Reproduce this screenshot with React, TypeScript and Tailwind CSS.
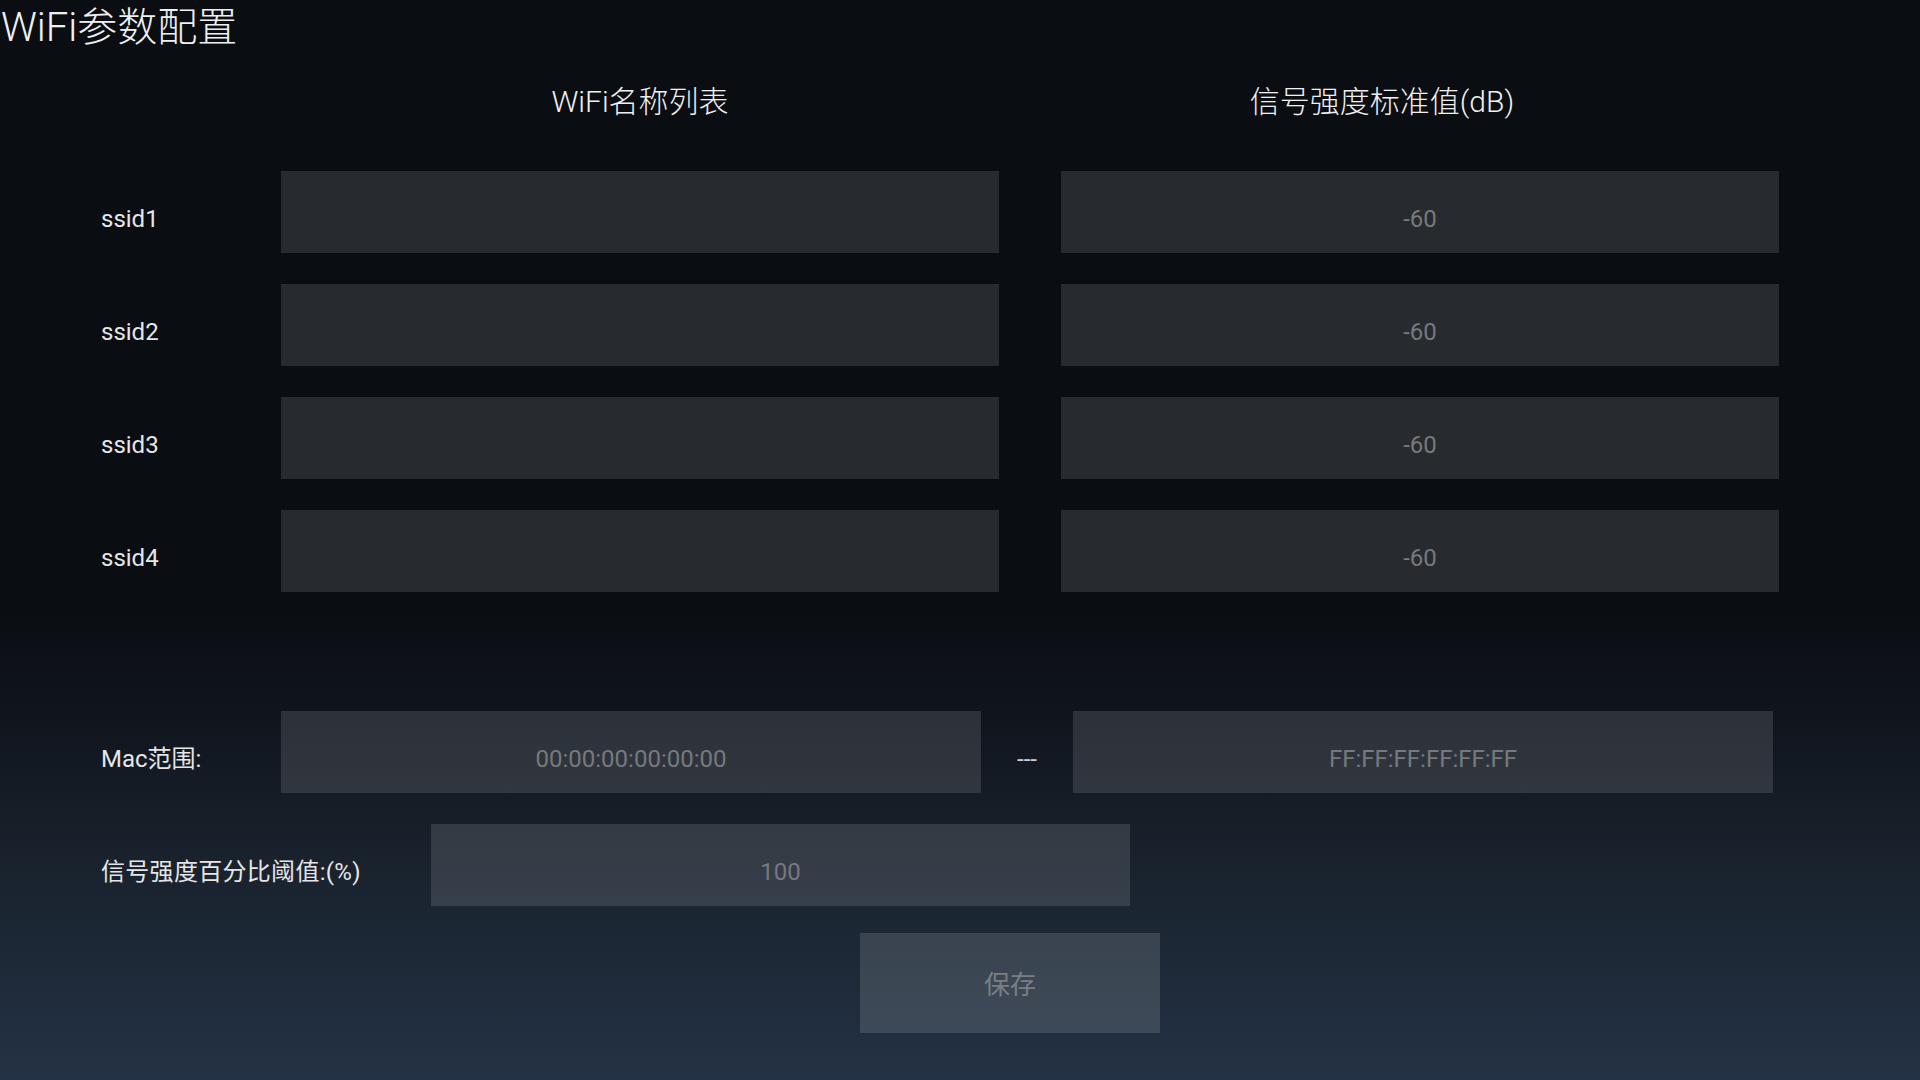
import React from "react";

const ssids = ["ssid1", "ssid2", "ssid3", "ssid4"];

export default function App() {
  return (
    <div className="h-[1080px] w-full overflow-hidden bg-[linear-gradient(180deg,#0a0d12_0%,#0a0d12_56%,#10151d_66%,#19222d_80%,#243245_100%)] font-['Roboto','Noto_Sans_CJK_SC',sans-serif] text-[#e6e6e6]">
      <h1 className="pl-[1px] text-[40px] font-light leading-[56px] text-[#f0f0f0]">WiFi参数配置</h1>

      <div className="flex h-[90px] items-center font-light text-[#f0f0f0]">
        <div className="ml-[281px] w-[718px] text-center text-[30px]">WiFi名称列表</div>
        <div className="ml-[62px] w-[642px] text-center text-[30px]">信号强度标准值(dB)</div>
      </div>

      <div className="mt-[25px] flex flex-col gap-[31px] pl-[101px]">
        {ssids.map((name) => (
          <div key={name} className="flex h-[82px] items-center">
            <div className="w-[180px] pt-[14px] text-[24px]">{name}</div>
            <div className="h-full w-[718px] bg-white/[0.12]" />
            <div className="ml-[62px] flex h-full w-[718px] items-center justify-center bg-white/[0.12] pt-[14px] text-[24px] text-[#76797d]">
              -60
            </div>
          </div>
        ))}
      </div>

      <div className="mt-[119px] flex h-[82px] items-center pl-[101px]">
        <div className="w-[180px] pt-[14px] text-[24px]">Mac范围:</div>
        <div className="flex h-full w-[700px] items-center justify-center bg-white/[0.12] pt-[14px] text-[24px] text-[#76797d]">
          00:00:00:00:00:00
        </div>
        <div className="w-[92px] pt-[14px] text-center text-[24px] text-[#d0d0d0]">---</div>
        <div className="flex h-full w-[700px] items-center justify-center bg-white/[0.12] pt-[14px] text-[24px] text-[#76797d]">
          FF:FF:FF:FF:FF:FF
        </div>
      </div>

      <div className="mt-[31px] flex h-[82px] items-center pl-[101px]">
        <div className="w-[330px] pt-[14px] text-[24px] tracking-[0.3px]">信号强度百分比阈值:(%)</div>
        <div className="flex h-full w-[699px] items-center justify-center bg-white/[0.12] pt-[14px] text-[24px] text-[#76797d]">
          100
        </div>
      </div>

      <button className="ml-[860px] mt-[27px] flex h-[100px] w-[300px] items-center justify-center bg-white/[0.13] pt-[4px] text-[26px] text-[#7a7e84]">
        保存
      </button>
    </div>
  );
}
